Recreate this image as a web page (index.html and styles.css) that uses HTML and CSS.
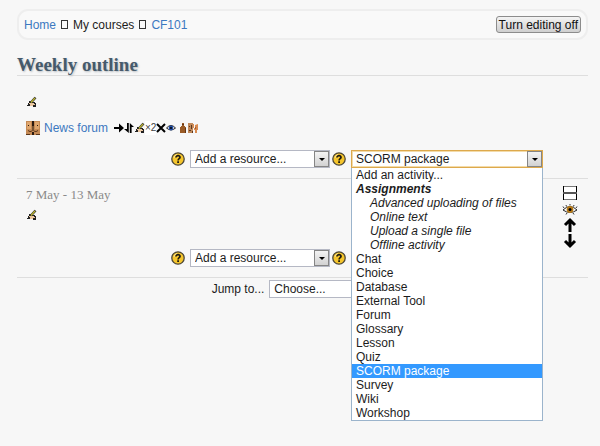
FILE: index.html
```html
<!DOCTYPE html>
<html lang="en">
<head>
<meta charset="utf-8">
<title>CF101: Weekly outline</title>
<link rel="stylesheet" href="styles.css">
</head>
<body>
<svg class="sprite" aria-hidden="true">
  <symbol id="edit" viewBox="0 0 11 12">
    <path fill="#222" d="M1 9h1V7h1V5h2v1h4v1h1v4H7v-1H1z"/>
    <path fill="#edc9a2" d="M3 7h5v1h1v1H7v1H4V8H3z"/>
    <path fill="none" stroke="#333" stroke-width="2.600" d="M9.500 1.500L5 6.500"/>
    <path fill="none" stroke="#b9b12c" stroke-width="1.300" d="M9 2L5 6.500"/>
  </symbol>
  <symbol id="help" viewBox="0 0 14 14">
    <circle cx="7" cy="7" r="6.200" fill="#f5c52c" stroke="#4b4638" stroke-width="1.300"/>
    <path fill="none" stroke="#fbe48c" d="M3 6a4 4 0 0 1 3-3.500"/>
    <path fill="none" stroke="#1d1a10" stroke-width="1.700" d="M5 5.500C5 3 9.200 3.200 9 5.400 8.900 6.600 7.100 6.700 7.100 8.400"/>
    <path fill="#1d1a10" d="M6.200 9.300H8V11H6.200z"/>
  </symbol>
</svg>
<main class="page">
  <header class="navbar">
    <nav class="crumbs" aria-label="Breadcrumb">
      <a href="#">Home</a><span class="sep"></span><span>My courses</span><span class="sep"></span><a href="#">CF101</a>
    </nav>
    <button class="edit-toggle" type="button">Turn editing off</button>
  </header>
  <h1 class="outline-title">Weekly outline</h1>

  <section class="week">
    <div class="week-body">
      <a class="edit" href="#" aria-label="Edit summary"><svg class="i-edit"><use href="#edit"/></svg></a>
      <div class="activity">
        <svg class="i-forum" viewBox="0 0 14 14">
          <path fill="#c58a55" d="M0 0h6l1 5v9H0zM8 0h6v14H7V5z"/>
          <path fill="#dfa66d" d="M1 1h4v7H1zM9 1h4v7H9z"/>
          <path fill="#2b1a10" d="M6 0h2v5H6zM6.500 5h1v5h-1zM6 11h2v3H6zM2 4h1v1H2zM11 4h1v1h-1z"/>
          <path fill="none" stroke="#5a361b" d="M2 9.500q2 2 4 .5M12 9.500q-2 2-4 .5M0 13.500h4M10 13.500h4"/>
        </svg>
        <a class="activity-name" href="#">News forum</a>
        <span class="commands">
          <svg class="i-cmd" viewBox="0 0 10 10"><path fill="#000" d="M0 4h5V.5L10 5 5 9.500V6H0z"/></svg>
          <svg class="i-cmd" viewBox="0 0 10 10"><path fill="#000" d="M3 0h1.800v10L0 6h3zM5.800 10V0L10 4H7.600v6z"/></svg>
          <svg class="i-edit"><use href="#edit"/></svg>
          <span class="dup">×2</span>
          <svg class="i-cmd" viewBox="0 0 10 10"><path fill="none" stroke="#000" stroke-width="2" d="M1 1l8 8M9 1L1 9"/></svg>
          <svg class="i-cmd" viewBox="0 0 10 10"><path fill="#fff" stroke="#222" d="M.5 5Q5 0 9.500 5 5 9 .5 5z"/><circle cx="5" cy="5" r="2.400" fill="#2450a8"/><circle cx="5" cy="5" r="1" fill="#000"/></svg>
          <svg class="i-group" viewBox="0 0 10 10"><path fill="#9a5b26" d="M4 0h2v3h1v1h1v6H2V4h1V3h1z"/><path fill="#633514" d="M4 1h2v1H4zM7 5h1v5H7z"/></svg>
          <svg class="i-cmd" viewBox="0 0 10 10"><path fill="#c28a5b" d="M0 0h5v10H0z"/><path fill="#5b3820" d="M1 3h1v1H1zM3 2h1v4H3zM1 7h2v1H1zM4 8h1v2H4z"/><path fill="#d98b50" d="M5 1h1v4H5zM7 2l3-1v6H9v3H7V7H6V5h1z"/><path fill="#a55a2e" d="M7 4h1v2H7z"/></svg>
        </span>
      </div>
      <div class="adders">
        <svg class="i-help"><use href="#help"/></svg>
        <span class="picker resource"><select aria-label="Add a resource"><option>Add a resource...</option></select></span>
        <svg class="i-help"><use href="#help"/></svg>
        <span class="picker activity-picker open"><select aria-label="Add an activity"><option>SCORM package</option></select>
          <ul class="menu" role="listbox" aria-label="Activities">
            <li role="option">Add an activity...</li>
            <li class="group">Assignments</li>
            <li class="sub" role="option">Advanced uploading of files</li>
            <li class="sub" role="option">Online text</li>
            <li class="sub" role="option">Upload a single file</li>
            <li class="sub" role="option">Offline activity</li>
            <li role="option">Chat</li>
            <li role="option">Choice</li>
            <li role="option">Database</li>
            <li role="option">External Tool</li>
            <li role="option">Forum</li>
            <li role="option">Glossary</li>
            <li role="option">Lesson</li>
            <li role="option">Quiz</li>
            <li class="selected" role="option" aria-selected="true">SCORM package</li>
            <li role="option">Survey</li>
            <li role="option">Wiki</li>
            <li role="option">Workshop</li>
          </ul>
        </span>
      </div>
    </div>
    <div class="week-tools"></div>
  </section>

  <section class="week dated">
    <div class="week-body">
      <h2 class="week-date">7 May - 13 May</h2>
      <a class="edit" href="#" aria-label="Edit summary"><svg class="i-edit"><use href="#edit"/></svg></a>
      <div class="adders">
        <svg class="i-help"><use href="#help"/></svg>
        <span class="picker resource"><select aria-label="Add a resource"><option>Add a resource...</option></select></span>
        <svg class="i-help"><use href="#help"/></svg>
        <span class="picker activity-picker"><select aria-label="Add an activity"><option>Add an activity...</option></select></span>
      </div>
    </div>
    <div class="week-tools">
      <svg class="i-tool" viewBox="0 0 16 16"><path fill="#fff" d="M2 1h12v14H2z"/><path fill="none" stroke="#777" d="M1 1.500h14M1 14.500h14"/><path fill="none" stroke="#555" d="M1 7.500h14M1 8.500h14"/><path fill="#000" d="M1 1h1v6H1zM14 1h1v6h-1zM1 9h1v6H1zM14 9h1v6h-1z"/></svg>
      <svg class="i-tool" viewBox="0 0 16 16"><path fill="#fff" stroke="#222" d="M1 9Q8 2 15 9 8 14 1 9z"/><circle cx="8" cy="8.500" r="3.400" fill="#b77a18"/><circle cx="8" cy="8.500" r="1.500" fill="#000"/><path stroke="#333" d="M2 7L1 5.500M4.500 5.500L4 4M8 4.500V3M11.500 5.500L12 4M14 7l1-1.500M5 12l-1 1.500M11 12l1 1.500"/></svg>
      <svg class="i-tool" viewBox="0 0 16 16"><path fill="none" stroke="#000" stroke-width="3" d="M8 15V3M3 8l5-5 5 5"/></svg>
      <svg class="i-tool" viewBox="0 0 16 16"><path fill="none" stroke="#000" stroke-width="3" d="M8 1v12M3 8l5 5 5-5"/></svg>
    </div>
  </section>

  <div class="jump">
    <label for="jump">Jump to...</label>
    <span class="picker jump-picker"><select id="jump"><option>Choose...</option></select></span>
  </div>
</main>
</body>
</html>
```
FILE: styles.css
```css
*, *::before, *::after { box-sizing: border-box; }

body {
  margin: 0;
  min-height: 100vh;
  background: #f7f7f7;
  color: #1c1c1c;
  font: 12px/14px "Liberation Sans", Arial, sans-serif;
}

a { color: #3c78c0; text-decoration: none; }
svg { display: block; flex: none; }
.sprite { position: absolute; width: 0; height: 0; }

.page { min-height: 100vh; padding: 9px 12px 24px 17px; }

.navbar {
  display: flex;
  align-items: center;
  justify-content: space-between;
  height: 31px;
  padding: 0 5px;
  border: 2px solid #eeeeee;
  border-radius: 11px;
  background: #f9f9f9;
}
.crumbs { display: flex; align-items: center; gap: 5px; }
.sep { width: 7px; height: 9px; border: 1px solid #333; }

.edit-toggle {
  height: 17px;
  padding: 0 2px;
  border: 1px solid #8c8c8c;
  border-radius: 3px;
  background: linear-gradient(#f4f4f4, #cfcfcf);
  color: #111;
  font: 12px/14px "Liberation Sans", Arial, sans-serif;
  white-space: nowrap;
}

.outline-title {
  margin: 14px 0 0;
  border-bottom: 1px solid #dedede;
  color: #465a6b;
  font: bold 19px/21px "Liberation Serif", serif;
  text-shadow: 1px 1px 2px #b8bdc2;
}

.week { display: flex; border-bottom: 1px solid #dedede; padding: 20px 0 10px; }
.week-body { flex: 1; display: flex; flex-direction: column; min-width: 0; }
.week-tools {
  width: 45px;
  flex: none;
  display: flex;
  flex-direction: column;
  align-items: center;
  padding-left: 8px;
}
.edit { align-self: flex-start; margin-left: 9px; }

.activity {
  display: flex;
  align-items: center;
  height: 16px;
  margin: 12px 0 14px 9px;
}
.activity-name { margin: 0 6px 0 4px; }
.commands { display: flex; align-items: center; }
.dup {
  color: #444;
  font-size: 10px;
  background: #ffffff;
}

.adders { display: flex; align-items: center; justify-content: flex-end; }
.adders > .resource { margin: 0 2px 0 5px; }
.adders > .activity-picker { margin-left: 5px; }

.picker { position: relative; display: block; height: 18px; }
.picker select {
  display: block;
  width: 100%;
  height: 18px;
  padding: 0 18px 0 4px;
  border: 1px solid #b5b8c4;
  border-radius: 0;
  appearance: none;
  background: #ffffff;
  color: #1c1c1c;
  font: 12px/14px "Liberation Sans", Arial, sans-serif;
}
.picker::after {
  content: "";
  position: absolute;
  top: 1px;
  right: 1px;
  width: 15px;
  height: 16px;
  border: 1px solid #858585;
  background: linear-gradient(#f3f3f3, #d2d2d2);
  pointer-events: none;
}
.picker::before {
  content: "";
  position: absolute;
  z-index: 1;
  top: 8px;
  right: 5px;
  border: 3px solid transparent;
  border-top-color: #000;
  border-bottom: 0;
  pointer-events: none;
}
.resource { width: 140px; }
.activity-picker { width: 192px; }
.jump-picker { width: 124px; }
.open select { border-color: #dda94c; outline: 0; box-shadow: inset 0 0 0 1px #f3dba9; }

.menu {
  position: absolute;
  z-index: 2;
  top: 18px;
  left: 0;
  right: 0;
  margin: 0;
  padding: 0;
  list-style: none;
  border: 1px solid #9bb4cc;
  border-top: 0;
  background: #ffffff;
}
.menu li { padding: 0 4px; white-space: nowrap; }
.menu .group { font-weight: bold; font-style: italic; }
.menu .sub { padding-left: 18px; font-style: italic; }
.menu .selected { background: #3399ff; color: #ffffff; }

.dated { padding-top: 6px; }
.dated .adders { margin-top: 28px; }
.week-date {
  margin: 2px 0 6px 9px;
  color: #8a8a8a;
  font: 13px/16px "Liberation Serif", serif;
}

.jump { display: flex; align-items: center; justify-content: center; gap: 5px; padding-top: 2px; }

.i-edit { width: 11px; height: 12px; }
.i-forum { width: 14px; height: 14px; }
.i-help { width: 14px; height: 14px; }
.i-cmd { width: 10px; height: 10px; }
.i-group { width: 10px; height: 10px; margin-left: 2px; }
.i-tool { width: 16px; height: 16px; }
```
